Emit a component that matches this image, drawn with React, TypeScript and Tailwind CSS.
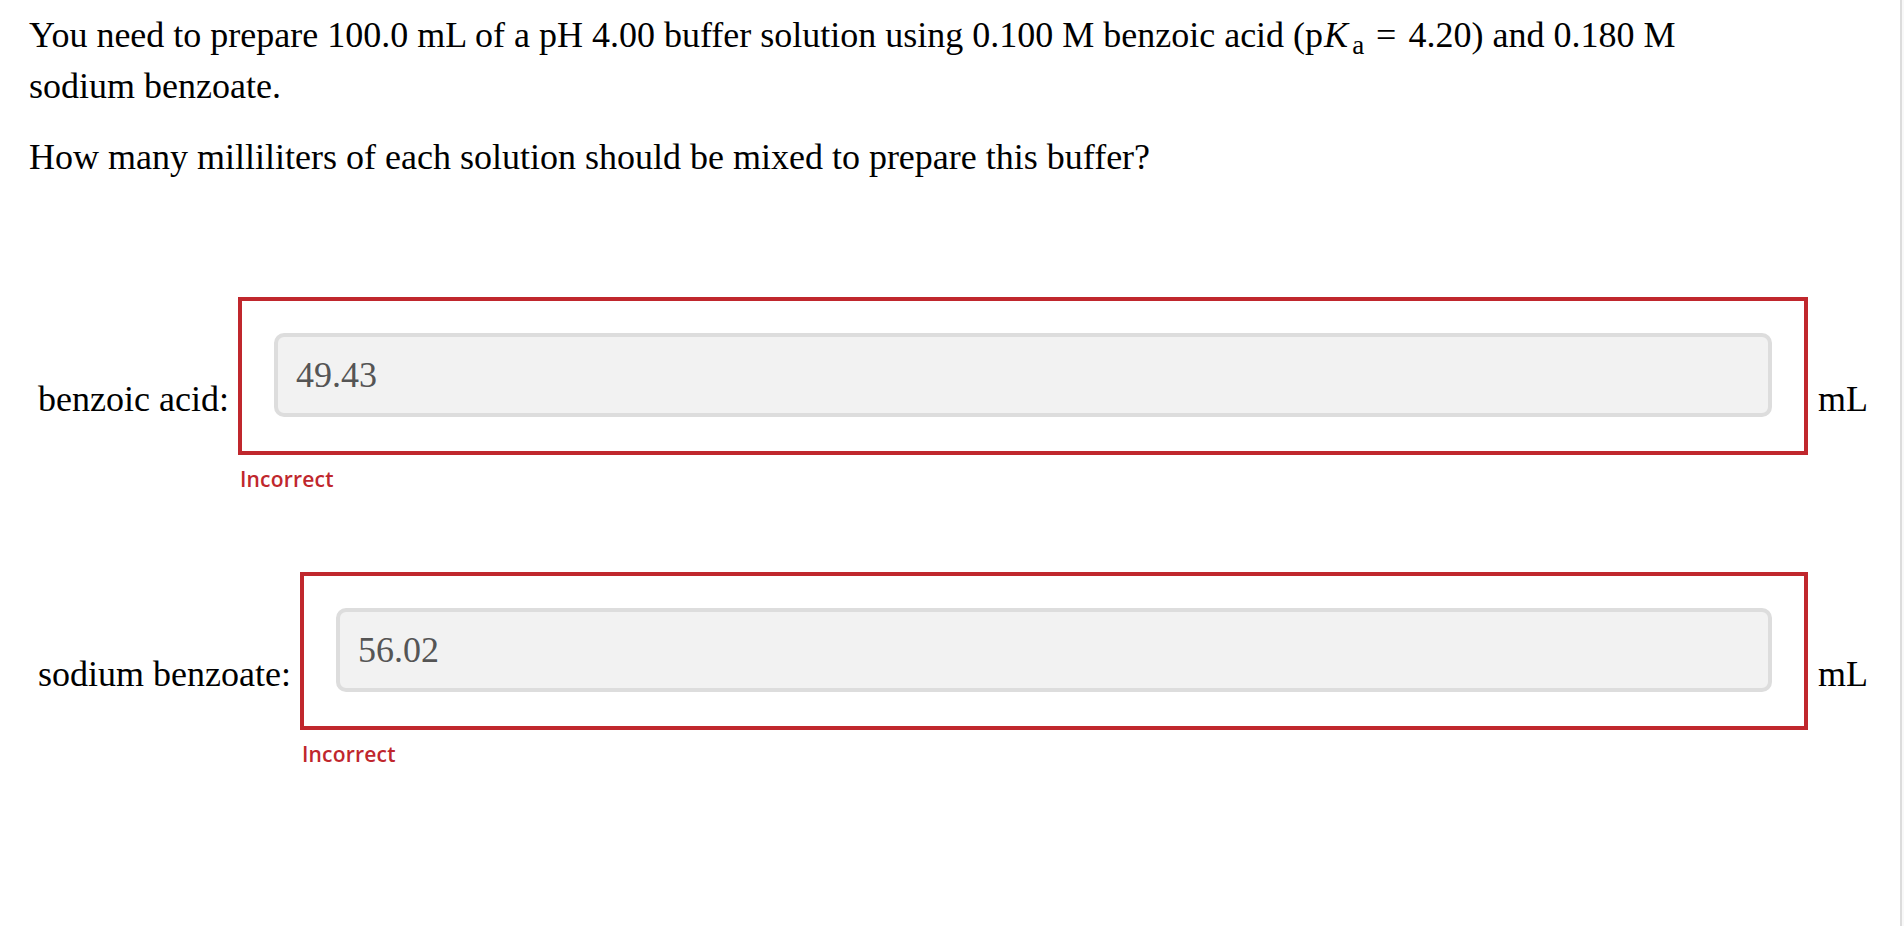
const rows = [
  { label: "benzoic acid:", value: "49.43" },
  { label: "sodium benzoate:", value: "56.02" },
];

const AnswerRow = ({ label, value }: { label: string; value: string }) => {
  return (
    <div className="flex items-start">
      <span className="pt-[77px] whitespace-nowrap">{label}</span>
      <div className="ml-[9px] flex-1">
        <div className="border-[4px] border-[#c0272d] px-[32px] pt-[32px] pb-[34px]">
          <input
            readOnly
            value={value}
            className="h-[84px] w-full rounded-[10px] border-[4px] border-[#dddddd] bg-[#f2f2f2] pl-[18px] text-[#555555] outline-none"
          />
        </div>
        <div className="mt-[10px] ml-[2px] font-['Open_Sans',sans-serif] text-[21px] leading-[28px] font-semibold tracking-[0.2px] text-[#c0272d]">
          Incorrect
        </div>
      </div>
      <span className="ml-[10px] pt-[77px]">mL</span>
    </div>
  );
};

export default function App() {
  return (
    <div className="flex min-h-screen bg-white">
      <div className="flex-1 pt-[10px] pr-[32px] pl-[29px] font-['Liberation_Serif',serif] text-[36px] leading-[51px] text-black">
        <p>
          You need to prepare 100.0 mL of a pH 4.00 buffer solution using 0.100 M benzoic acid (p
          <i className="ml-[1px] mr-[4px]">K</i>
          <sub className="text-[27px] leading-none">a</sub>
          <span className="ml-[12px] mr-[12px]">=</span>
          4.20) and 0.180 M
          <br />
          sodium benzoate.
        </p>
        <p className="mt-[20px]">How many milliliters of each solution should be mixed to prepare this buffer?</p>

        <div className="mt-[114px] flex flex-col gap-[79px] pl-[9px]">
          {rows.map((r) => (
            <AnswerRow key={r.label} label={r.label} value={r.value} />
          ))}
        </div>
      </div>
      <div className="w-[4px] border-l-2 border-[#dcdcdc] bg-[#f8f8f8]" />
    </div>
  );
}
